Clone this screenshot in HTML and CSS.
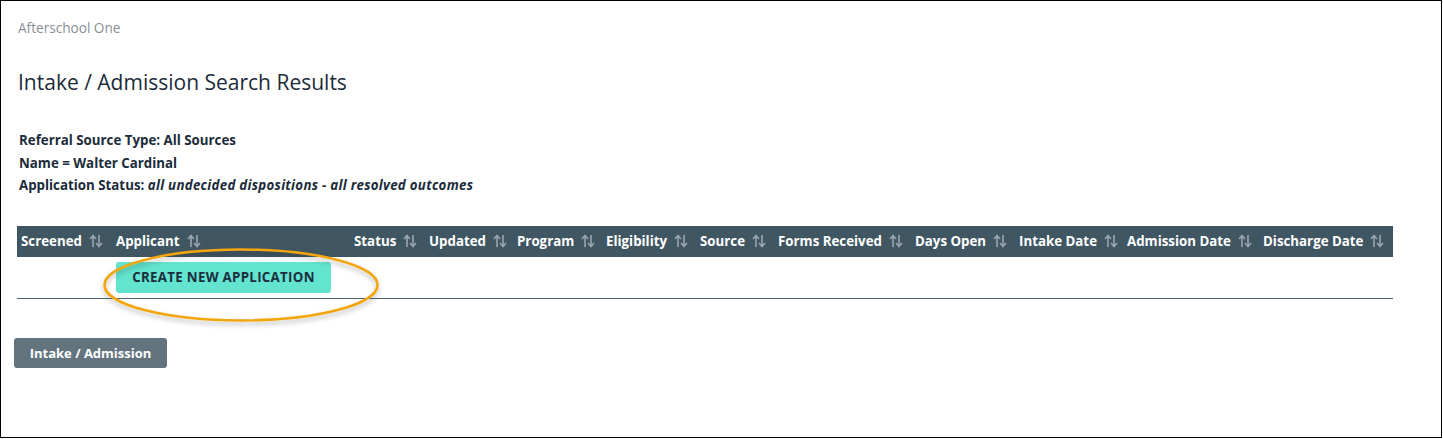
FILE: index.html
```html
<!DOCTYPE html>
<html>
<head>
<meta charset="utf-8">
<link rel="stylesheet" href="styles.css">
</head>
<body>
<div class="frame">
  <div class="brand">Afterschool One</div>
  <h1 class="title">Intake / Admission Search Results</h1>
  <div class="criteria">
    <div class="crit">Referral Source Type: All Sources</div>
    <div class="crit">Name = Walter Cardinal</div>
    <div class="crit">Application Status: <em>all undecided dispositions - all resolved outcomes</em></div>
  </div>
  <div class="results">
    <div class="thead">
      <div class="th c1">Screened<svg class="sort" viewBox="0 0 14 14"><path d="M4 13V2M1 5l3-3.5L7 5M10 1v11M7 9l3 3.5L13 9"/></svg></div>
      <div class="th c2">Applicant<svg class="sort" viewBox="0 0 14 14"><path d="M4 13V2M1 5l3-3.5L7 5M10 1v11M7 9l3 3.5L13 9"/></svg></div>
      <div class="th c3">Status<svg class="sort" viewBox="0 0 14 14"><path d="M4 13V2M1 5l3-3.5L7 5M10 1v11M7 9l3 3.5L13 9"/></svg></div>
      <div class="th c4">Updated<svg class="sort" viewBox="0 0 14 14"><path d="M4 13V2M1 5l3-3.5L7 5M10 1v11M7 9l3 3.5L13 9"/></svg></div>
      <div class="th c5">Program<svg class="sort" viewBox="0 0 14 14"><path d="M4 13V2M1 5l3-3.5L7 5M10 1v11M7 9l3 3.5L13 9"/></svg></div>
      <div class="th c6">Eligibility<svg class="sort" viewBox="0 0 14 14"><path d="M4 13V2M1 5l3-3.5L7 5M10 1v11M7 9l3 3.5L13 9"/></svg></div>
      <div class="th c7">Source<svg class="sort" viewBox="0 0 14 14"><path d="M4 13V2M1 5l3-3.5L7 5M10 1v11M7 9l3 3.5L13 9"/></svg></div>
      <div class="th c8">Forms Received<svg class="sort" viewBox="0 0 14 14"><path d="M4 13V2M1 5l3-3.5L7 5M10 1v11M7 9l3 3.5L13 9"/></svg></div>
      <div class="th c9">Days Open<svg class="sort" viewBox="0 0 14 14"><path d="M4 13V2M1 5l3-3.5L7 5M10 1v11M7 9l3 3.5L13 9"/></svg></div>
      <div class="th c10">Intake Date<svg class="sort" viewBox="0 0 14 14"><path d="M4 13V2M1 5l3-3.5L7 5M10 1v11M7 9l3 3.5L13 9"/></svg></div>
      <div class="th c11">Admission Date<svg class="sort" viewBox="0 0 14 14"><path d="M4 13V2M1 5l3-3.5L7 5M10 1v11M7 9l3 3.5L13 9"/></svg></div>
      <div class="th c12">Discharge Date<svg class="sort" viewBox="0 0 14 14"><path d="M4 13V2M1 5l3-3.5L7 5M10 1v11M7 9l3 3.5L13 9"/></svg></div>
    </div>
    <div class="trow">
      <div class="cell-first"></div>
      <div class="cell-action">
        <button class="btn-create">CREATE NEW APPLICATION</button>
        <svg class="callout" viewBox="0 0 292 90" width="292" height="90">
          <defs>
            <filter id="sh" x="-10%" y="-20%" width="120%" height="150%">
              <feDropShadow dx="0" dy="3" stdDeviation="2.5" flood-color="#000" flood-opacity="0.28"/>
            </filter>
          </defs>
          <ellipse cx="146" cy="43" rx="136.5" ry="35.5" fill="none" stroke="#f2a50c" stroke-width="2.6" filter="url(#sh)"/>
        </svg>
      </div>
    </div>
  </div>
  <button class="btn-intake">Intake / Admission</button>
</div>
</body>
</html>
```

FILE: styles.css
```css
html, body {
  margin: 0;
  padding: 0;
  background: #fff;
}
body {
  font-family: "Open Sans", "Noto Sans", Arial, sans-serif;
  color: #1b2b3a;
}
.frame {
  box-sizing: border-box;
  width: 1442px;
  height: 438px;
  border: 1px solid #000;
  padding: 18px 0 0 16px;
}
.brand {
  margin-left: 1px;
  font-size: 13.6px;
  color: #8a8f94;
  line-height: 17px;
}
.title {
  margin: 33px 0 0 1px;
  font-size: 21px;
  font-weight: 400;
  line-height: 27px;
  color: #1b2b3a;
}
.criteria {
  margin-top: 33px;
  padding-left: 2px;
}
.crit {
  font-size: 13.3px;
  font-weight: 700;
  line-height: 22.5px;
}
.crit em {
  font-style: italic;
  font-weight: 700;
  letter-spacing: 0.28px;
}
.results {
  margin-top: 29px;
  width: 1376px;
}
.thead {
  display: grid;
  grid-template-columns: 99px 238px 75px 88px 89px 94px 78px 137px 104px 108px 136px 1fr;
  background: #405663;
  height: 31px;
  align-items: center;
}
.th {
  color: #fff;
  font-size: 13.3px;
  font-weight: 700;
  white-space: nowrap;
  display: flex;
  align-items: center;
}
.th.c1 { padding-left: 4px; }
.sort {
  width: 14px;
  height: 14px;
  margin-left: 7px;
  fill: none;
  stroke: #9aa6ae;
  stroke-width: 1.6;
}
.trow {
  display: flex;
  height: 41px;
  border-bottom: 1px solid #4b6579;
}
.cell-first {
  width: 99px;
}
.cell-action {
  position: relative;
  padding-top: 5px;
}
.btn-create {
  display: block;
  width: 215px;
  height: 31px;
  border: 0;
  border-radius: 3px;
  background: #62e4cf;
  color: #1a2e3d;
  font-family: inherit;
  font-size: 13.3px;
  font-weight: 700;
  letter-spacing: 0.3px;
  padding: 0;
  cursor: pointer;
}
.callout {
  position: absolute;
  left: -21px;
  top: -15px;
  overflow: visible;
  pointer-events: none;
}
.btn-intake {
  display: block;
  margin: 39px 0 0 -3px;
  width: 153px;
  height: 30px;
  border: 0;
  border-radius: 3px;
  background: #64747f;
  color: #fff;
  font-family: inherit;
  font-size: 13px;
  font-weight: 700;
  padding: 0;
}
```
